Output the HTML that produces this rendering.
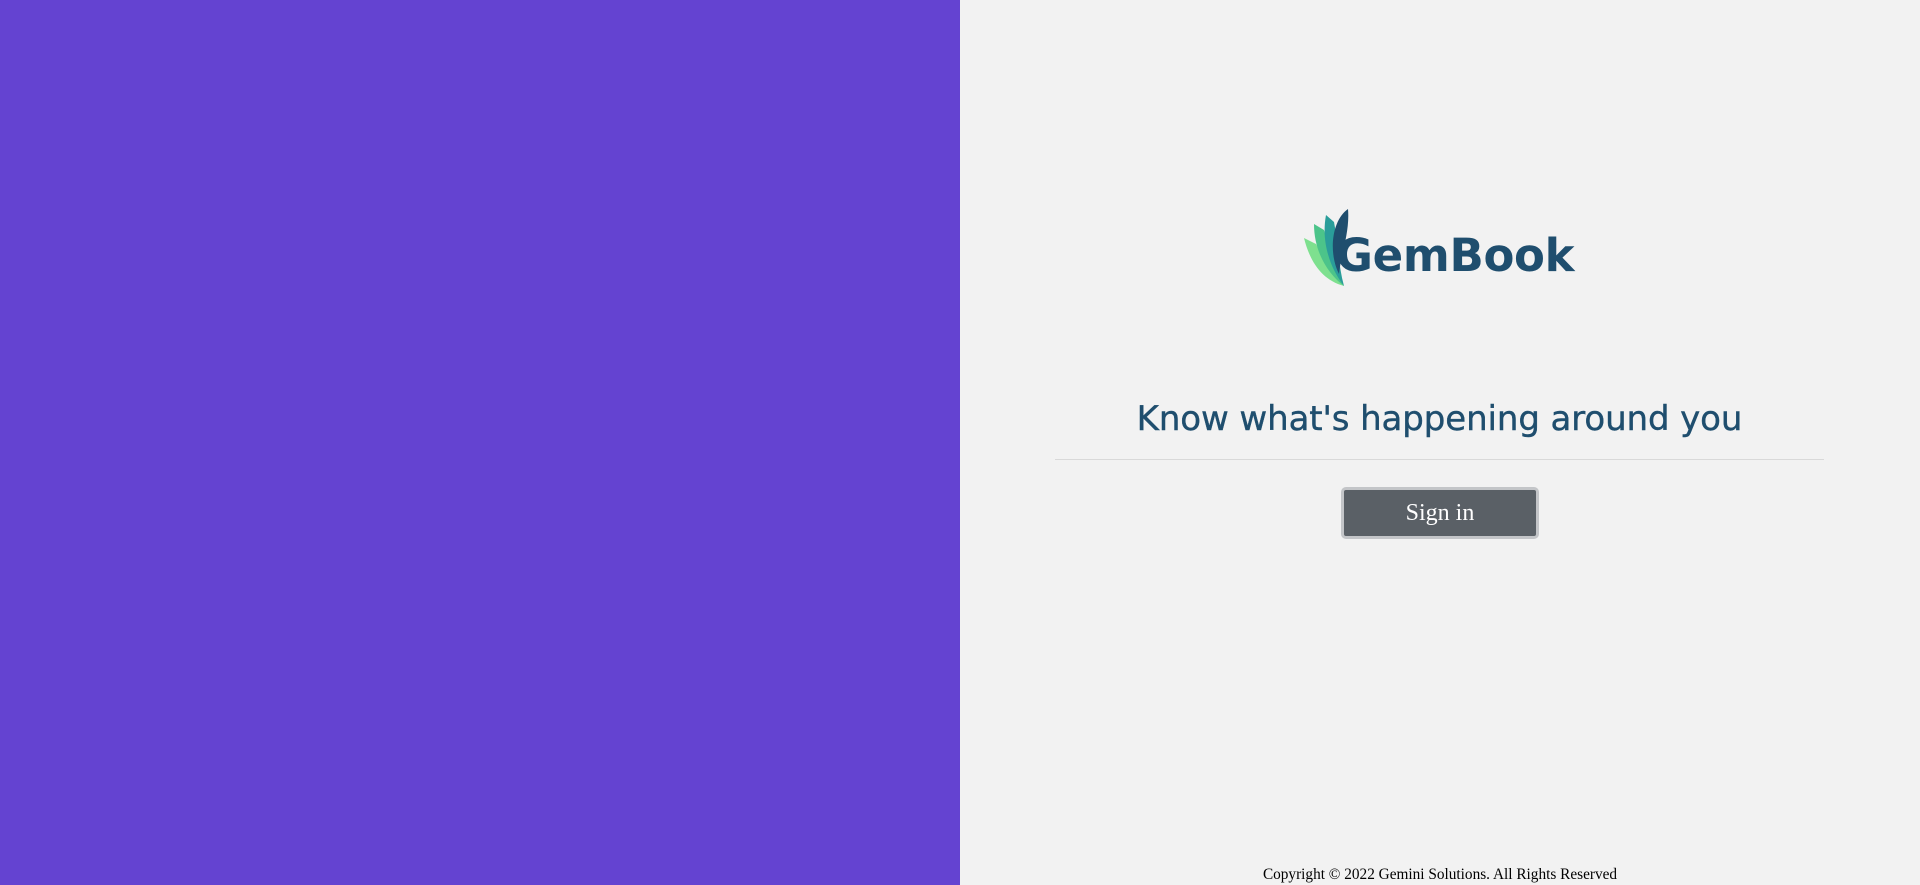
<!DOCTYPE html>
<html><head><style>
html,body{margin:0;padding:0;width:1920px;height:885px;overflow:hidden;background:#f2f2f2}
.left{position:absolute;left:0;top:0;width:960px;height:885px;background:#6443d1}
.logo{position:absolute;left:1302px;top:202px}
.gb{position:absolute;left:1336px;top:229px;font:bold 45px "DejaVu Sans","Liberation Sans",sans-serif;color:#1f4e6e;letter-spacing:-0.3px}
h1{position:absolute;left:1055px;width:769px;top:399px;margin:0;text-align:center;font:500 34px "DejaVu Sans","Liberation Sans",sans-serif;color:#1f4e6e;letter-spacing:-0.1px;white-space:nowrap;-webkit-text-stroke:0.4px #1f4e6e}
.hr{position:absolute;left:1055px;width:769px;top:459px;height:1px;background:#d9d9d9}
.btn{position:absolute;left:1341px;top:487px;width:192px;height:46px;border:3px solid #c3c5c8;border-radius:5px;background:#5a6066;color:#fff;font:24px "Liberation Serif",serif;text-align:center;line-height:46px}
.foot{position:absolute;left:960px;right:0;top:866px;text-align:center;font:15.3px "Liberation Serif",serif;color:#000}
</style></head><body>
<div class="left"></div>
<svg class="logo" width="60" height="90" viewBox="0 0 60 90">
<path d="M2 36 C8 60 20 78 42 84 C30 72 22 56 14 42 Z" fill="#7ee08f"/>
<path d="M12 22 C12 50 26 72 42 84 C32 66 28 46 22 28 Z" fill="#4cc48a"/>
<path d="M24 13 C19 40 28 66 42 84 C36 62 36 40 32 20 Z" fill="#2a9d9a"/>
<path d="M46 7 C30 18 26 50 37 72 C39 52 48 30 46 7 Z" fill="#1f4e6e"/>
</svg>
<div class="gb">GemBook</div>
<h1>Know what's happening around you</h1>
<div class="hr"></div>
<div class="btn">Sign in</div>
<div class="foot">Copyright © 2022 Gemini Solutions. All Rights Reserved</div>
</body></html>
